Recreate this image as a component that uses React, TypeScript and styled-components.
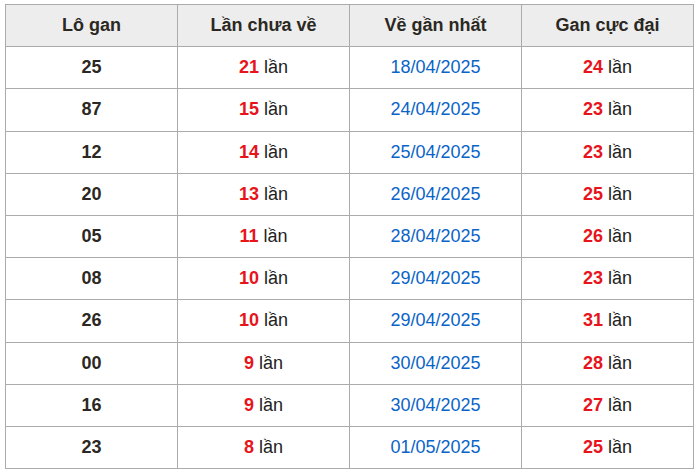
import React from "react";
import styled, { createGlobalStyle } from "styled-components";

const Global = createGlobalStyle`
  html, body { margin: 0; padding: 0; background: #ffffff; }
  body { font-family: "Liberation Sans", Arial, sans-serif; }
`;

const Wrap = styled.div`
  padding: 4px 0 0 5px;
`;

const Table = styled.table`
  width: 689px;
  border-collapse: collapse;
  table-layout: fixed;
  font-family: "Liberation Sans", Arial, sans-serif;
  font-size: 18px;
`;

const Row = styled.tr`
  height: 42.2px;
`;

const HeadCell = styled.th`
  background: #ededed;
  border: 1px solid #ababab;
  color: #2b2823;
  font-weight: bold;
  text-align: center;
  vertical-align: middle;
  padding: 0;
`;

const Cell = styled.td`
  border: 1px solid #ababab;
  color: #222;
  text-align: center;
  vertical-align: middle;
  padding: 0;
`;

const Lo = styled.span`
  font-weight: bold;
  color: #2b2823;
`;

const Num = styled.span`
  font-weight: bold;
  color: #e8141c;
`;

const DateText = styled.span`
  color: #0a64c8;
`;

type Item = { lo: string; chua: number; ve: string; max: number };

const data: Item[] = [
  { lo: "25", chua: 21, ve: "18/04/2025", max: 24 },
  { lo: "87", chua: 15, ve: "24/04/2025", max: 23 },
  { lo: "12", chua: 14, ve: "25/04/2025", max: 23 },
  { lo: "20", chua: 13, ve: "26/04/2025", max: 25 },
  { lo: "05", chua: 11, ve: "28/04/2025", max: 26 },
  { lo: "08", chua: 10, ve: "29/04/2025", max: 23 },
  { lo: "26", chua: 10, ve: "29/04/2025", max: 31 },
  { lo: "00", chua: 9, ve: "30/04/2025", max: 28 },
  { lo: "16", chua: 9, ve: "30/04/2025", max: 27 },
  { lo: "23", chua: 8, ve: "01/05/2025", max: 25 },
];

export default function App() {
  return (
    <>
      <Global />
      <Wrap>
        <Table>
          <thead>
            <Row>
              <HeadCell>Lô gan</HeadCell>
              <HeadCell>Lần chưa về</HeadCell>
              <HeadCell>Về gần nhất</HeadCell>
              <HeadCell>Gan cực đại</HeadCell>
            </Row>
          </thead>
          <tbody>
            {data.map((d, i) => (
              <Row key={i}>
                <Cell>
                  <Lo>{d.lo}</Lo>
                </Cell>
                <Cell>
                  <Num>{d.chua}</Num> lần
                </Cell>
                <Cell>
                  <DateText>{d.ve}</DateText>
                </Cell>
                <Cell>
                  <Num>{d.max}</Num> lần
                </Cell>
              </Row>
            ))}
          </tbody>
        </Table>
      </Wrap>
    </>
  );
}
